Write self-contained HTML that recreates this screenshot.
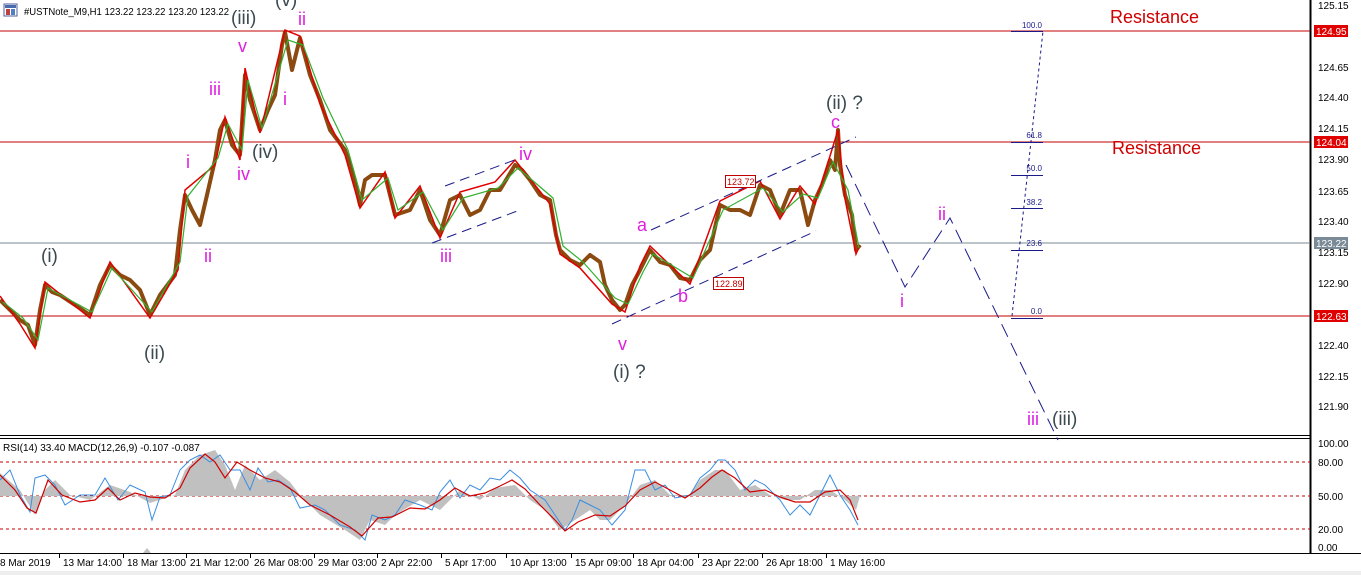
<!DOCTYPE html>
<html><head><meta charset="utf-8"><style>
html,body{margin:0;padding:0;background:#fff;width:1361px;height:575px;overflow:hidden}
svg{display:block}
text{font-family:"Liberation Sans",sans-serif}
</style></head><body>
<svg width="1361" height="575" viewBox="0 0 1361 575" xmlns="http://www.w3.org/2000/svg">
<rect width="1361" height="575" fill="#fff"/>
<!-- frames -->
<line x1="1310.5" y1="0" x2="1310.5" y2="553" stroke="#000" stroke-width="2"/>
<line x1="0" y1="435.5" x2="1310" y2="435.5" stroke="#000"/>
<line x1="0" y1="438.5" x2="1310" y2="438.5" stroke="#000"/>
<line x1="0" y1="553.5" x2="1361" y2="553.5" stroke="#000"/>
<rect x="0" y="571" width="1361" height="4" fill="#eee"/>

<!-- horizontal levels -->
<line x1="0" y1="31" x2="1310" y2="31" stroke="#c00000"/>
<line x1="0" y1="142" x2="1310" y2="142" stroke="#c00000"/>
<line x1="0" y1="316" x2="1310" y2="316" stroke="#c00000"/>
<line x1="0" y1="243" x2="1310" y2="243" stroke="#7a8a96"/>

<!-- header -->
<rect x="4" y="4" width="13" height="12" fill="#fff" stroke="#5060a0"/>
<rect x="5" y="5" width="11" height="3" fill="#4a6ab0"/>
<rect x="6" y="9" width="4" height="6" fill="#c04040"/>
<rect x="11" y="9" width="4" height="6" fill="#5080c0"/>
<text x="24" y="15" font-size="10.5" fill="#000" textLength="205" lengthAdjust="spacingAndGlyphs">#USTNote_M9,H1  123.22 123.22 123.20 123.22</text>

<!-- price -->
<polyline fill="none" stroke="#8b4a10" stroke-width="4" stroke-linejoin="round" points="0,300 10,310 20,320 28,325 35,345 40,310 45,285 52,292 60,295 75,305 90,315 100,285 110,265 120,275 130,280 140,290 150,315 160,295 175,275 180,230 185,195 192,210 200,225 207,195 215,160 220,130 225,120 232,145 240,155 245,75 250,100 260,130 268,110 275,95 282,45 285,32 292,70 300,38 310,75 320,100 330,130 345,150 352,170 360,205 365,180 372,175 385,175 395,215 410,210 420,190 430,220 440,235 450,200 460,195 470,215 480,210 490,190 500,190 515,165 522,170 530,180 540,195 550,200 556,235 560,250 570,260 580,265 590,255 600,262 605,285 612,300 620,310 625,305 632,285 640,270 650,250 660,262 670,265 680,278 690,280 700,260 710,250 720,205 730,210 740,210 750,215 760,185 770,190 780,215 790,190 800,190 808,225 815,200 822,185 830,160 835,170 838,130 840,165 845,195 852,215 856,250 860,245"/>
<polyline fill="none" stroke="#e00000" stroke-width="1.5" points="0,296 20,324 35,348 45,282 90,318 110,262 150,318 178,270 185,190 215,165 225,117 240,160 245,68 260,133 285,30 300,36 320,104 345,155 360,208 385,172 395,218 420,186 440,238 460,192 495,182 515,160 550,204 560,254 580,268 612,304 625,312 640,266 650,246 690,284 720,201 760,181 780,219 800,186 815,204 830,156 838,130 845,199 856,254 860,245"/>
<polyline fill="none" stroke="#30b030" stroke-width="1.2" points="3,302 23,318 38,340 48,288 92,312 112,268 152,312 180,262 188,196 218,158 228,124 242,150 248,80 262,128 288,40 303,45 323,98 348,150 362,200 388,178 398,210 423,192 443,230 463,198 498,188 518,168 553,198 563,246 583,262 615,298 628,304 643,272 653,254 693,278 723,210 763,188 783,212 803,194 818,198 833,162 848,190 859,248"/>

<!-- channels -->
<g stroke="#1a1a8a" stroke-width="1" stroke-dasharray="10,6" fill="none">
<line x1="432" y1="243" x2="520" y2="210"/>
<line x1="445" y1="186" x2="520" y2="158"/>
<line x1="612" y1="324" x2="816" y2="231"/>
<line x1="651" y1="230" x2="856" y2="137"/>
<polyline stroke-dasharray="14,7" points="846,165 905,287 950,218 1058,440"/>
</g>
<!-- fib -->
<line x1="1012" y1="316" x2="1043" y2="31" stroke="#1a1a8a" stroke-dasharray="3,3"/>
<g stroke="#1a1a8a">
<line x1="1011" y1="31.5" x2="1043" y2="31.5"/>
<line x1="1011" y1="142.5" x2="1043" y2="142.5"/>
<line x1="1011" y1="175.5" x2="1043" y2="175.5"/>
<line x1="1011" y1="208.5" x2="1043" y2="208.5"/>
<line x1="1011" y1="250.5" x2="1043" y2="250.5"/>
<line x1="1011" y1="318.5" x2="1043" y2="318.5"/>
</g>
<g font-size="8" fill="#1a1a8a" text-anchor="end">
<text x="1042" y="28">100.0</text><text x="1042" y="138">61.8</text><text x="1042" y="171">50.0</text>
<text x="1042" y="205">38.2</text><text x="1042" y="246">23.6</text><text x="1042" y="314">0.0</text>
</g>

<!-- price boxes -->
<rect x="725.5" y="175.5" width="30" height="12" fill="#fff" stroke="#c00000"/>
<text x="727" y="185" font-size="9" fill="#c00000">123.72</text>
<rect x="713.5" y="277.5" width="30" height="12" fill="#fff" stroke="#c00000"/>
<text x="715" y="287" font-size="9" fill="#c00000">122.89</text>

<!-- labels -->
<g font-size="18" fill="#d00000"><text x="1110" y="23">Resistance</text><text x="1112" y="154">Resistance</text></g>
<g font-size="19" fill="#3a4a50">
<text x="231" y="24">(iii)</text><text x="275" y="6">(v)</text><text x="252" y="158">(iv)</text>
<text x="41" y="262">(i)</text><text x="144" y="359">(ii)</text><text x="613" y="378">(i) ?</text>
<text x="826" y="109">(ii) ?</text><text x="1052" y="425">(iii)</text>
</g>
<g font-size="18" fill="#e020e0">
<text x="298" y="25">ii</text><text x="238" y="52">v</text><text x="209" y="95">iii</text>
<text x="283" y="105">i</text><text x="186" y="168">i</text><text x="237" y="180">iv</text>
<text x="204" y="262">ii</text><text x="519" y="160">iv</text><text x="440" y="262">iii</text>
<text x="618" y="350">v</text><text x="637" y="231">a</text><text x="678" y="302">b</text>
<text x="831" y="128">c</text><text x="938" y="220">ii</text><text x="900" y="307">i</text>
<text x="1027" y="425">iii</text>
</g>

<!-- right axis -->
<g font-size="10" fill="#000">
<text x="1318" y="9">125.15</text><text x="1318" y="71">124.65</text><text x="1318" y="101">124.40</text>
<text x="1318" y="132">124.15</text><text x="1318" y="163">123.90</text><text x="1318" y="195">123.65</text>
<text x="1318" y="225">123.40</text><text x="1318" y="256">123.15</text><text x="1318" y="287">122.90</text>
<text x="1318" y="349">122.40</text><text x="1318" y="380">122.15</text><text x="1318" y="410">121.90</text>
<text x="1318" y="447">100.00</text><text x="1318" y="466">80.00</text><text x="1318" y="500">50.00</text>
<text x="1318" y="533">20.00</text><text x="1318" y="551">0.00</text>
</g>
<rect x="1314" y="25" width="34" height="12" fill="#e00000"/><text x="1316" y="35" font-size="10" fill="#fff">124.95</text>
<rect x="1314" y="136" width="34" height="12" fill="#e00000"/><text x="1316" y="146" font-size="10" fill="#fff">124.04</text>
<rect x="1314" y="237" width="34" height="12" fill="#7a8a96"/><text x="1316" y="247" font-size="10" fill="#fff">123.22</text>
<rect x="1314" y="310" width="34" height="12" fill="#e00000"/><text x="1316" y="320" font-size="10" fill="#fff">122.63</text>

<!-- indicator -->
<g stroke="#c00000" stroke-dasharray="3,3"><line x1="0" y1="462" x2="1310" y2="462"/><line x1="0" y1="496" x2="1310" y2="496"/><line x1="0" y1="529" x2="1310" y2="529"/></g>
<polygon fill="#c0c0c0" points="0,473 20,490 35,515 45,490 55,480 70,495 90,500 110,485 130,492 150,503 175,495 185,470 200,455 215,450 225,465 235,490 245,465 260,480 275,470 290,482 300,495 310,505 320,515 345,530 360,540 370,520 385,525 395,515 420,500 440,510 460,490 480,500 495,488 515,485 530,500 545,510 560,530 575,520 590,510 600,520 610,520 625,505 640,485 655,480 670,495 690,495 700,480 715,470 725,470 740,490 755,485 770,495 785,500 800,500 815,490 830,490 845,500 856,510 860,496 0,496"/>
<polyline fill="none" stroke="#3a8ee0" stroke-width="1" points="0,480 10,470 20,495 30,512 35,478 45,475 55,485 65,505 80,495 95,495 105,478 118,500 130,485 145,492 152,520 160,497 170,495 180,470 190,460 200,455 210,462 220,455 230,470 240,470 250,490 258,468 268,482 278,480 290,488 300,508 315,505 325,510 340,525 355,530 365,540 372,515 385,520 395,515 405,500 420,505 432,510 440,492 450,480 460,498 470,485 480,490 490,478 500,480 510,470 520,478 530,490 545,500 555,515 565,530 572,520 580,500 590,505 600,510 612,525 625,510 635,470 645,470 655,490 665,485 675,498 690,495 700,478 710,470 718,460 725,460 735,470 745,490 755,480 765,485 780,500 790,515 800,505 810,515 820,495 830,475 840,495 850,510 858,525"/>
<polyline fill="none" stroke="#d00000" stroke-width="1.2" points="0,475 15,490 27,508 36,513 48,480 62,495 80,502 95,500 108,488 120,500 135,493 150,497 165,498 180,488 190,468 205,454 215,462 225,478 237,462 250,470 265,478 280,482 295,492 310,505 330,515 350,527 362,536 378,518 392,517 410,508 425,509 440,500 455,488 470,496 485,493 500,486 512,480 525,489 540,505 555,520 565,531 578,522 595,515 610,516 625,506 640,490 655,482 670,490 685,498 700,488 712,477 722,470 735,478 750,492 765,490 780,497 795,502 810,502 825,492 840,490 850,500 858,520"/>
<text x="3" y="451" font-size="10" fill="#000">RSI(14) 33.40 MACD(12,26,9) -0.107 -0.087</text>
<polygon points="143,553 147,548 151,553" fill="#c0c0c0"/>

<!-- time axis -->
<g font-size="10" fill="#000">
<text x="0" y="566">8 Mar 2019</text><text x="63" y="566">13 Mar 14:00</text><text x="127" y="566">18 Mar 13:00</text>
<text x="190" y="566">21 Mar 12:00</text><text x="254" y="566">26 Mar 08:00</text><text x="318" y="566">29 Mar 03:00</text>
<text x="381" y="566">2 Apr 22:00</text><text x="445" y="566">5 Apr 17:00</text><text x="510" y="566">10 Apr 13:00</text>
<text x="575" y="566">15 Apr 09:00</text><text x="637" y="566">18 Apr 04:00</text><text x="702" y="566">23 Apr 22:00</text>
<text x="766" y="566">26 Apr 18:00</text><text x="830" y="566">1 May 16:00</text>
</g>
<g stroke="#000"><line x1="59.5" y1="553" x2="59.5" y2="558"/><line x1="123.5" y1="553" x2="123.5" y2="558"/><line x1="186.5" y1="553" x2="186.5" y2="558"/><line x1="250.5" y1="553" x2="250.5" y2="558"/><line x1="314.5" y1="553" x2="314.5" y2="558"/><line x1="377.5" y1="553" x2="377.5" y2="558"/><line x1="441.5" y1="553" x2="441.5" y2="558"/><line x1="506.5" y1="553" x2="506.5" y2="558"/><line x1="571.5" y1="553" x2="571.5" y2="558"/><line x1="633.5" y1="553" x2="633.5" y2="558"/><line x1="698.5" y1="553" x2="698.5" y2="558"/><line x1="762.5" y1="553" x2="762.5" y2="558"/><line x1="826.5" y1="553" x2="826.5" y2="558"/></g>
</svg>
</body></html>
